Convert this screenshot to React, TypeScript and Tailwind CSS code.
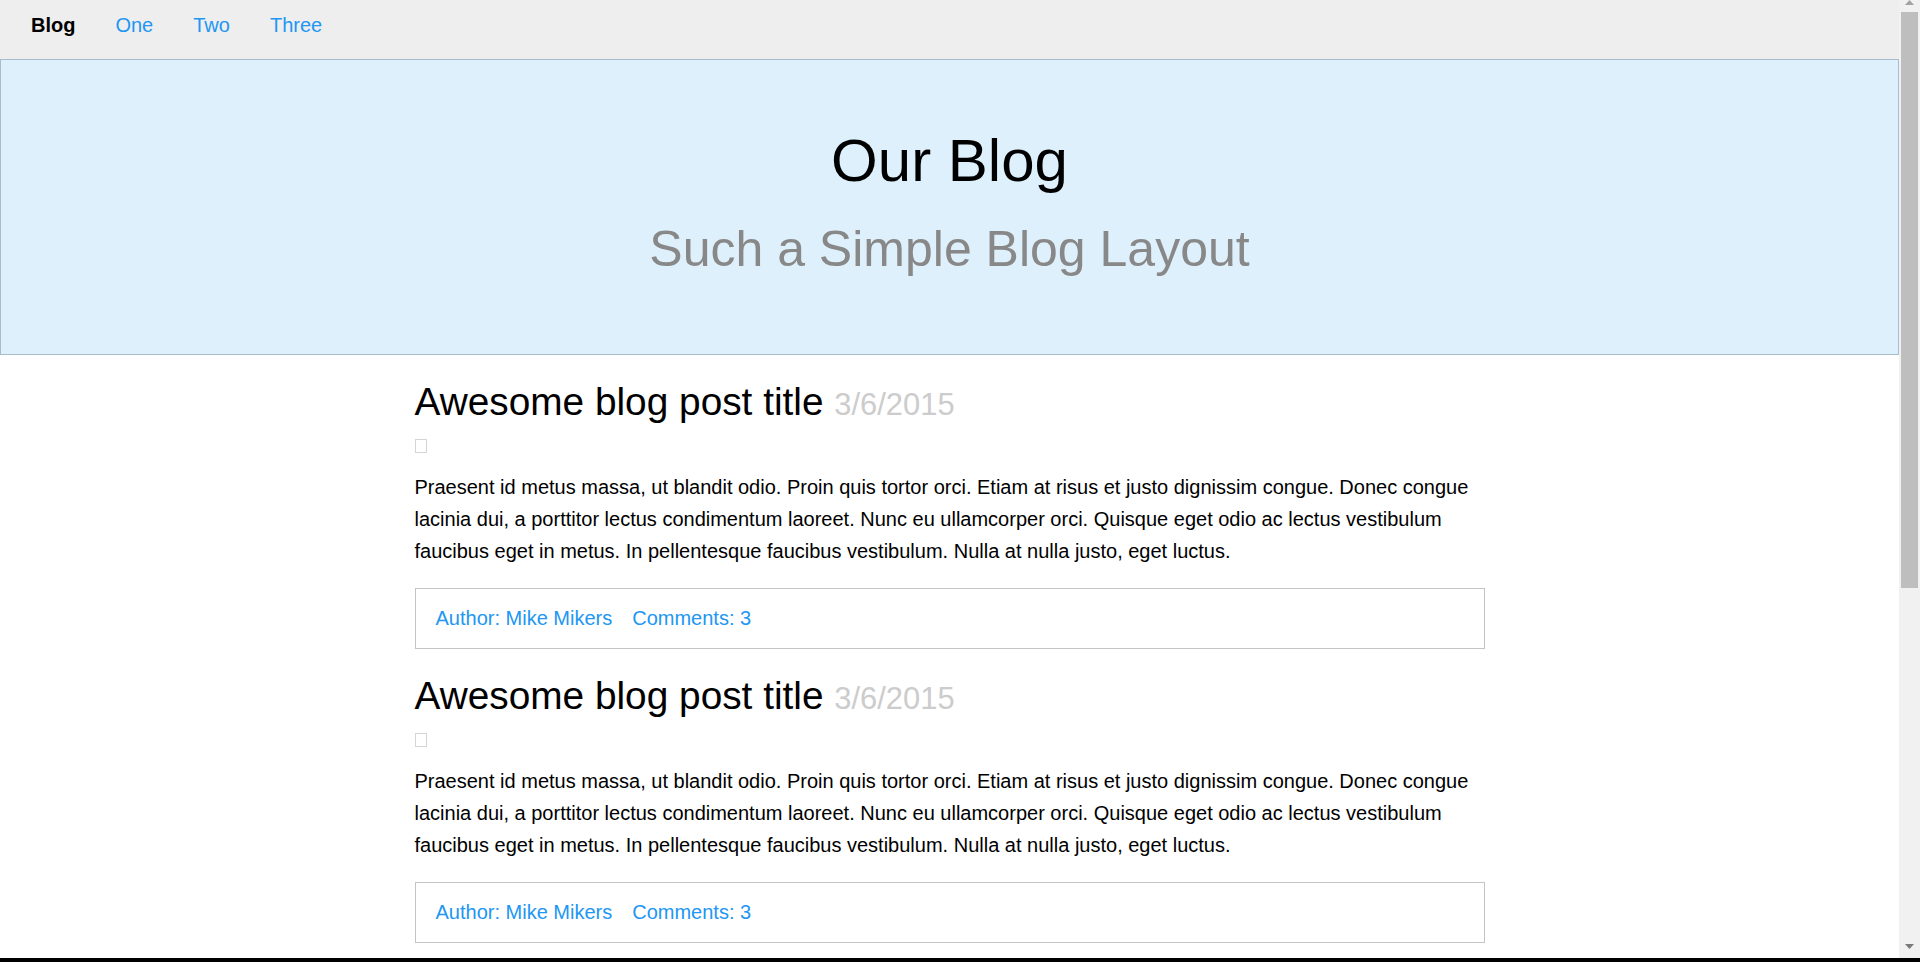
import React from "react";

function Post() {
  return (
    <article className="pt-[28px]">
      <h2 className="text-[38.8px] leading-[38.4px] font-normal text-black">
        Awesome blog post title{" "}
        <span className="text-[30.9px] leading-none text-[#cccccc]">3/6/2015</span>
      </h2>
      <div className="mt-[17.8px] h-[14px] w-[12px] border border-[#d5d5d5]" />
      <p className="mt-[17.6px] text-[20px] leading-[32px] text-black">
        Praesent id metus massa, ut blandit odio. Proin quis tortor orci. Etiam at risus et justo dignissim congue. Donec
        congue lacinia dui, a porttitor lectus condimentum laoreet. Nunc eu ullamcorper orci. Quisque eget odio ac lectus
        vestibulum faucibus eget in metus. In pellentesque faucibus vestibulum. Nulla at nulla justo, eget luctus.
      </p>
      <div className="mt-[21px] flex h-[61px] items-center gap-5 border border-[#c4c4c4] px-5 text-[20px] leading-[22px] text-[#2196f3]">
        <a>Author: Mike Mikers</a>
        <a>Comments: 3</a>
      </div>
    </article>
  );
}

function Scrollbar() {
  return (
    <div className="flex w-[21px] shrink-0 flex-col items-center bg-[#f1f1f1]">
      <div className="flex h-[12px] w-full items-start justify-center">
        <svg width="9" height="5" viewBox="0 0 9 5">
          <path d="M4.5 0L9 5H0z" fill="#a3a3a3" />
        </svg>
      </div>
      <div className="h-[576px] w-[17px] bg-[#bebebe]" />
      <div className="flex-1" />
      <div className="flex h-[14px] w-full items-start justify-center">
        <svg width="9" height="5" viewBox="0 0 9 5">
          <path d="M0 0H9L4.5 5z" fill="#7a7a7a" />
        </svg>
      </div>
    </div>
  );
}

export default function App() {
  return (
    <div className="flex h-[962px] w-[1920px] flex-col overflow-hidden bg-white font-['Liberation_Sans',Arial,sans-serif]">
      <div className="flex h-[958px] min-h-0">
        <div className="flex min-w-0 flex-1 flex-col overflow-hidden">
          <nav className="flex h-[59px] shrink-0 items-start bg-[#eeeeee] pl-[11px] pt-[15px] text-[20px] leading-[20px]">
            <a className="px-5 font-bold text-black">Blog</a>
            <a className="px-5 text-[#2196f3]">One</a>
            <a className="px-5 text-[#2196f3]">Two</a>
            <a className="px-5 text-[#2196f3]">Three</a>
          </nav>
          <header className="flex h-[296px] shrink-0 flex-col items-center border border-[#a9bccb] bg-[#def0fc]">
            <h1 className="mt-[70.9px] text-[60px] leading-[60px] font-normal text-black">Our Blog</h1>
            <h2 className="mt-[33.5px] text-[50px] leading-[50px] font-normal text-[#888888]">
              Such a Simple Blog Layout
            </h2>
          </header>
          <main className="mx-auto w-[1070px] shrink-0">
            <Post />
            <Post />
          </main>
        </div>
        <Scrollbar />
      </div>
      <div className="h-[4px] shrink-0 bg-black" />
    </div>
  );
}
